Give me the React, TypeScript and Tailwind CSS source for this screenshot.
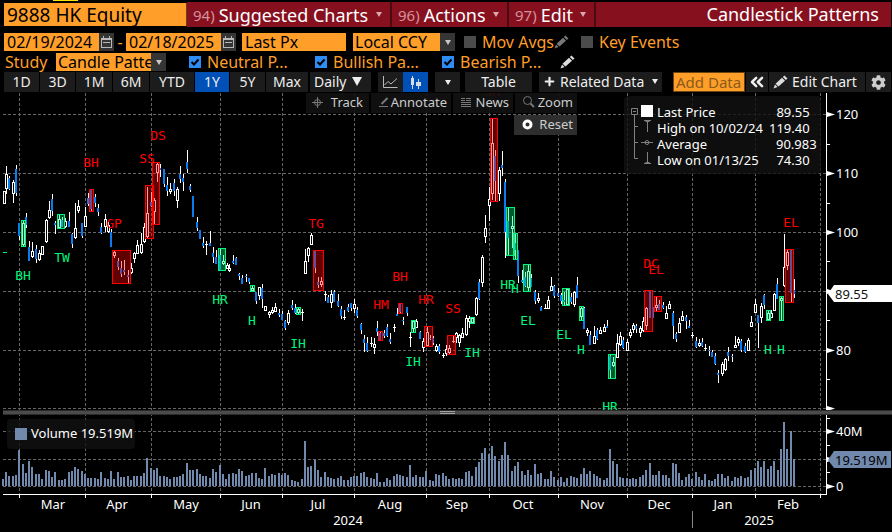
import { ChevronsLeft, Plus } from "lucide-react";
import { FaCog } from "react-icons/fa";

// x, high, low, body top, body bottom, kind (u = hollow, d = filled, n = doji)
type Candle = [number, number, number, number, number, "u" | "d" | "n"];

const candles: Candle[] = [
  [4, 191, 204, 191, 204, "u"], [6, 166, 194, 174, 189, "u"], [9, 176, 190, 178, 189, "d"],
  [13, 180, 203, 182, 194, "u"], [16, 165, 196, 169, 193, "d"], [19, 223, 240, 223, 236, "d"],
  [23, 221, 246, 223, 245, "u"], [26, 213, 228, 217, 225, "d"], [29, 241, 261, 247, 261, "d"],
  [32, 242, 258, 251, 257, "u"], [36, 245, 263, 249, 259, "d"], [39, 250, 261, 253, 260, "u"],
  [42, 246, 255, 246, 255, "u"], [46, 219, 243, 220, 242, "u"], [49, 201, 219, 210, 218, "u"],
  [52, 194, 216, 199, 211, "d"], [55, 221, 234, 223, 225, "d"], [59, 215, 228, 219, 228, "u"],
  [62, 217, 227, 220, 227, "d"], [65, 218, 228, 221, 227, "u"], [69, 212, 227, 221, 227, "d"],
  [72, 233, 248, 234, 244, "d"], [75, 203, 239, 228, 238, "u"], [78, 200, 213, 206, 211, "u"],
  [82, 223, 238, 223, 236, "d"], [85, 207, 227, 216, 227, "u"], [88, 193, 206, 198, 204, "d"],
  [91, 190, 211, 190, 209, "d"], [95, 194, 207, 197, 203, "d"], [98, 204, 216, 208, 212, "d"],
  [101, 223, 234, 227, 233, "d"], [105, 214, 232, 219, 227, "u"], [108, 222, 233, 225, 232, "u"],
  [111, 229, 247, 232, 247, "d"], [114, 251, 258, 252, 256, "u"], [118, 258, 270, 261, 267, "d"],
  [121, 261, 277, 268, 274, "d"], [124, 260, 275, 270, 272, "d"], [128, 270, 283, 275, 277, "d"],
  [131, 263, 274, 268, 273, "u"], [134, 252, 263, 253, 259, "u"], [137, 240, 254, 245, 254, "u"],
  [141, 233, 254, 244, 253, "u"], [144, 223, 243, 227, 242, "u"], [147, 187, 238, 213, 237, "u"],
  [151, 192, 207, 202, 206, "d"], [154, 198, 225, 200, 212, "u"], [157, 163, 182, 164, 173, "u"],
  [160, 164, 177, 168, 170, "d"], [164, 169, 187, 169, 184, "d"], [167, 177, 196, 185, 191, "d"],
  [170, 183, 194, 189, 192, "u"], [174, 179, 196, 183, 191, "d"], [177, 187, 208, 189, 201, "u"],
  [180, 166, 183, 174, 179, "d"], [183, 174, 191, 178, 182, "d"], [187, 150, 173, 162, 169, "d"],
  [190, 184, 192, 186, 190, "d"], [193, 196, 217, 196, 217, "d"], [197, 217, 231, 222, 228, "d"],
  [200, 230, 239, 230, 239, "d"], [203, 237, 248, 243, 246, "d"], [206, 241, 255, 244, 244, "n"],
  [210, 231, 246, 243, 246, "d"], [213, 247, 263, 253, 257, "d"], [216, 250, 264, 257, 264, "d"],
  [220, 249, 270, 255, 270, "d"], [223, 255, 265, 261, 264, "u"], [227, 263, 269, 265, 269, "u"],
  [229, 264, 272, 268, 271, "u"], [233, 255, 264, 261, 263, "d"], [236, 257, 265, 258, 265, "d"],
  [239, 273, 280, 274, 276, "d"], [242, 275, 284, 278, 284, "d"], [246, 274, 282, 276, 277, "d"],
  [249, 278, 284, 278, 282, "d"], [252, 286, 291, 288, 291, "u"], [256, 292, 304, 292, 301, "d"],
  [259, 287, 300, 287, 296, "u"], [262, 284, 308, 288, 299, "d"], [265, 306, 311, 306, 311, "u"],
  [269, 311, 318, 312, 315, "u"], [272, 307, 314, 310, 313, "u"], [275, 303, 312, 307, 312, "u"],
  [279, 309, 317, 313, 315, "d"], [282, 311, 320, 314, 320, "d"], [285, 320, 330, 321, 328, "d"],
  [288, 310, 325, 313, 323, "u"], [292, 300, 310, 305, 308, "d"], [295, 304, 314, 308, 313, "d"],
  [298, 308, 314, 309, 313, "u"], [302, 309, 321, 312, 312, "n"], [305, 249, 274, 261, 274, "u"],
  [308, 247, 262, 248, 256, "u"], [311, 233, 245, 235, 245, "u"], [315, 251, 273, 251, 268, "d"],
  [318, 277, 288, 282, 285, "d"], [321, 277, 287, 281, 285, "u"], [325, 291, 301, 294, 294, "n"],
  [328, 295, 303, 297, 303, "d"], [331, 290, 308, 294, 303, "u"], [334, 290, 302, 292, 302, "d"],
  [338, 294, 307, 301, 306, "d"], [341, 306, 319, 309, 316, "d"], [344, 310, 320, 317, 317, "n"],
  [348, 304, 312, 307, 311, "d"], [351, 303, 311, 303, 308, "d"], [354, 299, 313, 304, 309, "u"],
  [357, 307, 318, 310, 316, "d"], [361, 323, 334, 324, 330, "d"], [364, 335, 352, 339, 343, "d"],
  [367, 337, 352, 343, 351, "d"], [371, 337, 347, 343, 343, "n"], [374, 338, 354, 344, 348, "u"],
  [377, 321, 336, 328, 332, "d"], [380, 331, 340, 333, 340, "d"], [384, 330, 338, 333, 336, "d"],
  [387, 324, 337, 327, 336, "d"], [390, 333, 344, 339, 342, "d"], [394, 324, 332, 327, 327, "n"],
  [397, 308, 316, 314, 316, "d"], [400, 303, 313, 304, 312, "d"], [403, 317, 325, 320, 321, "d"],
  [407, 307, 316, 307, 313, "d"], [410, 332, 347, 337, 337, "n"], [413, 320, 332, 321, 329, "u"],
  [416, 319, 328, 321, 328, "u"], [420, 331, 339, 332, 339, "d"], [423, 338, 352, 341, 348, "u"],
  [427, 327, 346, 332, 346, "u"], [430, 335, 340, 338, 339, "d"], [433, 336, 345, 338, 343, "d"],
  [436, 344, 352, 346, 351, "u"], [439, 344, 354, 346, 352, "d"], [443, 353, 358, 355, 355, "n"],
  [446, 345, 356, 349, 354, "u"], [449, 345, 354, 348, 353, "u"], [453, 336, 343, 341, 341, "n"],
  [456, 332, 343, 333, 338, "u"], [459, 334, 347, 335, 343, "u"], [462, 328, 338, 333, 338, "u"],
  [466, 315, 336, 318, 335, "u"], [469, 316, 328, 318, 322, "u"], [472, 317, 324, 318, 323, "u"],
  [476, 297, 316, 298, 315, "u"], [479, 279, 300, 282, 299, "d"], [482, 255, 287, 257, 283, "u"],
  [485, 215, 243, 228, 237, "u"], [489, 187, 221, 199, 206, "u"], [492, 119, 200, 143, 194, "u"],
  [495, 150, 201, 156, 181, "d"], [499, 167, 201, 170, 194, "u"], [502, 151, 176, 165, 168, "d"],
  [505, 179, 258, 182, 232, "d"], [508, 208, 255, 221, 238, "d"], [512, 216, 248, 226, 229, "u"],
  [515, 233, 259, 243, 250, "d"], [518, 250, 283, 250, 276, "d"], [522, 270, 283, 280, 282, "d"],
  [525, 272, 287, 277, 286, "d"], [528, 265, 291, 271, 288, "u"], [531, 274, 287, 278, 287, "d"],
  [535, 290, 304, 292, 301, "d"], [538, 293, 303, 298, 301, "u"], [541, 306, 311, 307, 311, "d"],
  [545, 304, 309, 308, 308, "n"], [548, 296, 309, 300, 309, "u"], [551, 277, 291, 286, 291, "u"],
  [554, 285, 298, 286, 296, "d"], [558, 288, 297, 293, 296, "d"], [561, 293, 304, 295, 301, "d"],
  [564, 292, 306, 300, 302, "d"], [567, 289, 305, 289, 305, "u"], [571, 293, 304, 297, 302, "d"],
  [574, 291, 307, 292, 305, "u"], [577, 277, 298, 285, 298, "d"], [581, 307, 320, 308, 317, "u"],
  [584, 307, 329, 308, 329, "d"], [587, 328, 336, 330, 333, "u"], [590, 331, 345, 335, 345, "d"],
  [594, 326, 344, 336, 344, "u"], [597, 328, 340, 330, 339, "d"], [600, 327, 334, 330, 334, "u"],
  [604, 324, 332, 327, 332, "u"], [607, 320, 328, 326, 328, "d"], [610, 355, 378, 356, 370, "d"],
  [613, 357, 367, 362, 366, "u"], [617, 334, 358, 343, 358, "u"], [620, 332, 346, 336, 345, "u"],
  [623, 337, 349, 340, 348, "d"], [627, 339, 351, 342, 351, "u"], [630, 329, 338, 332, 336, "u"],
  [633, 323, 333, 325, 330, "u"], [636, 324, 333, 326, 329, "d"], [640, 326, 337, 328, 333, "u"],
  [643, 317, 332, 321, 331, "u"], [646, 307, 330, 308, 326, "u"], [650, 291, 318, 291, 318, "d"],
  [653, 307, 318, 307, 318, "d"], [656, 297, 311, 305, 308, "u"], [659, 300, 310, 304, 310, "d"],
  [663, 302, 309, 305, 308, "d"], [666, 306, 319, 313, 319, "u"], [669, 301, 309, 304, 309, "u"],
  [673, 311, 339, 313, 326, "d"], [676, 332, 342, 334, 339, "d"], [679, 318, 333, 323, 333, "u"],
  [682, 311, 321, 316, 321, "u"], [686, 315, 329, 317, 321, "d"], [689, 320, 328, 326, 328, "d"],
  [692, 332, 338, 335, 335, "n"], [696, 337, 348, 341, 347, "d"], [699, 339, 347, 343, 346, "u"],
  [702, 338, 347, 342, 346, "d"], [705, 344, 351, 348, 348, "n"], [709, 346, 356, 350, 351, "d"],
  [712, 350, 357, 352, 357, "d"], [715, 353, 365, 356, 364, "d"], [718, 370, 383, 373, 375, "d"],
  [722, 362, 376, 364, 374, "u"], [725, 358, 371, 359, 370, "u"], [728, 347, 361, 352, 356, "d"],
  [732, 354, 362, 356, 357, "d"], [735, 336, 348, 345, 348, "u"], [738, 337, 346, 339, 343, "u"],
  [741, 339, 352, 341, 350, "d"], [745, 343, 353, 346, 352, "d"], [748, 338, 351, 340, 351, "u"],
  [751, 316, 327, 322, 327, "u"], [755, 299, 313, 304, 313, "u"], [758, 315, 348, 315, 323, "d"],
  [761, 303, 323, 306, 318, "u"], [764, 294, 309, 295, 305, "d"], [768, 310, 321, 313, 320, "u"],
  [771, 310, 318, 313, 318, "u"], [774, 293, 311, 294, 311, "u"], [777, 278, 299, 284, 299, "d"],
  [781, 297, 320, 298, 301, "u"], [784, 234, 287, 267, 286, "u"], [787, 250, 270, 252, 266, "u"],
  [791, 249, 302, 249, 293, "d"], [794, 279, 298, 290, 294, "d"],
];

// x, bar height
const volumes: [number, number][] = [
  [3, 7], [6, 14], [9, 10], [13, 10], [16, 11], [19, 36], [23, 22], [26, 13], [29, 25], [32, 19],
  [36, 12], [39, 12], [42, 7], [46, 16], [49, 15], [52, 9], [55, 14], [59, 6], [62, 6], [65, 7],
  [69, 14], [72, 15], [75, 19], [78, 17], [82, 15], [85, 12], [88, 8], [91, 8], [95, 8], [98, 7],
  [101, 14], [105, 8], [108, 7], [111, 15], [114, 7], [118, 14], [121, 9], [124, 9], [128, 10],
  [131, 6], [134, 10], [137, 10], [141, 10], [144, 13], [147, 28], [151, 18], [154, 16], [157, 18],
  [160, 10], [164, 10], [167, 9], [170, 7], [174, 9], [177, 9], [180, 10], [183, 12], [187, 23],
  [190, 16], [193, 16], [197, 17], [200, 12], [203, 10], [206, 10], [210, 8], [213, 17], [216, 14],
  [220, 21], [223, 12], [226, 7], [229, 12], [233, 13], [236, 12], [239, 17], [242, 15], [246, 10],
  [249, 11], [252, 13], [256, 13], [259, 8], [262, 7], [265, 18], [269, 10], [272, 12], [275, 11],
  [279, 13], [282, 11], [285, 13], [288, 11], [292, 6], [295, 5], [298, 4], [302, 7], [305, 45],
  [308, 19], [311, 20], [315, 26], [318, 16], [321, 9], [325, 14], [328, 9], [331, 8], [334, 7],
  [338, 8], [341, 10], [344, 6], [348, 6], [351, 9], [354, 10], [357, 10], [361, 13], [364, 14],
  [367, 9], [371, 8], [374, 7], [377, 13], [380, 4], [384, 4], [387, 8], [390, 6], [394, 10],
  [397, 12], [400, 11], [403, 10], [407, 9], [410, 21], [413, 9], [416, 11], [420, 9], [423, 9],
  [426, 15], [430, 6], [433, 5], [436, 12], [439, 11], [443, 13], [446, 10], [449, 7], [453, 8],
  [456, 7], [459, 8], [462, 7], [466, 14], [469, 15], [472, 10], [476, 19], [479, 24], [482, 33],
  [485, 38], [489, 32], [492, 40], [495, 30], [499, 25], [502, 31], [505, 44], [508, 31], [512, 15],
  [515, 20], [518, 24], [522, 15], [525, 11], [528, 16], [531, 11], [535, 22], [538, 12], [541, 13],
  [545, 7], [548, 7], [551, 15], [554, 9], [558, 6], [561, 9], [564, 4], [567, 8], [571, 10],
  [574, 9], [577, 8], [581, 12], [584, 18], [587, 12], [590, 15], [594, 12], [597, 10], [600, 8],
  [604, 6], [607, 8], [610, 37], [613, 25], [617, 22], [620, 9], [623, 8], [627, 8], [630, 7],
  [633, 8], [636, 7], [640, 9], [643, 11], [646, 16], [650, 23], [653, 11], [656, 11], [659, 15],
  [663, 11], [666, 11], [669, 8], [673, 23], [676, 22], [679, 13], [682, 6], [686, 9], [689, 12],
  [692, 7], [696, 14], [699, 9], [702, 6], [705, 12], [709, 6], [712, 5], [715, 7], [718, 12],
  [722, 12], [725, 8], [728, 10], [732, 5], [735, 9], [738, 8], [741, 10], [745, 8], [748, 9],
  [751, 16], [755, 18], [758, 25], [761, 19], [764, 25], [768, 17], [771, 20], [774, 25], [778, 16],
  [781, 37], [784, 64], [787, 37], [791, 55], [794, 27],
];

// x, y, width, height
const bearishBoxes = [
  [89, 189, 5, 23], [112, 250, 19, 34], [145, 185, 9, 54], [152, 162, 8, 63], [313, 250, 11, 41],
  [378, 331, 5, 10], [398, 303, 5, 11], [424, 326, 9, 21], [447, 335, 9, 20], [490, 118, 8, 84],
  [644, 290, 9, 42], [654, 296, 8, 16], [785, 249, 9, 54],
];
const bullishBoxes = [
  [21, 220, 5, 27], [57, 214, 8, 15], [218, 248, 8, 23], [250, 285, 5, 7], [296, 307, 5, 8],
  [411, 320, 5, 13], [470, 317, 5, 7], [506, 207, 9, 49], [513, 233, 5, 27], [523, 264, 8, 28],
  [562, 288, 8, 18], [579, 306, 5, 15], [608, 354, 8, 25], [766, 310, 5, 11], [779, 296, 5, 25],
];

const bearishLabels: [string, number, number][] = [
  ["BH", 91, 167], ["GP", 114, 228], ["SS", 147, 163], ["DS", 158, 140], ["TG", 316, 228],
  ["HM", 381, 309], ["BH", 400, 281], ["HR", 426, 304], ["SS", 453, 313], ["HR", 492, 96],
  ["DC", 651, 268], ["EL", 656, 274], ["EL", 791, 227],
];
const bullishLabels: [string, number, number][] = [
  ["BH", 23, 280], ["TW", 62, 262], ["HR", 220, 304], ["H", 252, 325], ["IH", 298, 348],
  ["IH", 413, 366], ["IH", 472, 357], ["HR", 508, 289], ["H", 515, 293], ["EL", 528, 325],
  ["EL", 564, 339], ["H", 581, 354], ["HR", 610, 411], ["H", 768, 354], ["H", 781, 354],
];

const gridX = [19, 85, 151, 220, 282, 354, 426, 489, 558, 627, 692, 755, 820];
const gridY = [114, 173, 232, 291, 350, 408, 431, 459, 486];
const minorTicks = [144, 203, 261, 320, 379, 418, 445, 472];
const axisLabels: [string, number][] = [
  ["120", 114], ["110", 173], ["100", 232], ["", 291], ["80", 350], ["", 408], ["40M", 431], ["", 459], ["0", 486],
];
const months: [string, number][] = [
  ["Mar", 53], ["Apr", 117], ["May", 186], ["Jun", 251], ["Jul", 318], ["Aug", 390],
  ["Sep", 457], ["Oct", 523], ["Nov", 592], ["Dec", 659], ["Jan", 723], ["Feb", 788],
];

function Pencil({ className }: { className: string }) {
  return (
    <svg viewBox="0 0 15 14" width="15" height="14" fill="currentColor" className={className}>
      <path d="M11.5 0.5 14.5 3.5 12.8 5 9.8 2Z M9 2.7 12 5.7 5.5 11.5 2.5 8.8Z M2 9.6 4.6 12 0.5 13.5Z" />
    </svg>
  );
}

function Arrow({ className = "" }: { className?: string }) {
  return (
    <svg viewBox="0 0 6 5" width="6" height="5" className={className}>
      <path d="M0 0H6L3 5Z" fill="currentColor" />
    </svg>
  );
}

function CalendarButton({ label }: { label: string }) {
  return (
    <button aria-label={label} className="flex h-[18px] w-[15px] items-center justify-center bg-[#353535] text-[#b8b8b8]">
      <svg viewBox="0 0 11 12" width="11" height="12" fill="none" stroke="currentColor" shapeRendering="crispEdges">
        <path d="M0.5 2.5H10.5V11.5H0.5Z M0 3.5H11 M2.5 0V3 M8.5 0V3 M2 6.5H9" />
      </svg>
    </button>
  );
}

function Check({ label, checked, className }: { label: string; checked?: boolean; className: string }) {
  return (
    <label className={`flex items-center gap-1.5 ${className}`}>
      <span className="relative flex size-3">
        <input
          type="checkbox"
          defaultChecked={checked}
          className="peer size-3 appearance-none bg-[#4b4b4b] checked:bg-[#2e8df5]"
        />
        <svg viewBox="0 0 12 12" className="pointer-events-none absolute inset-0 hidden peer-checked:block">
          <path d="M2.5 6 5 8.5 9.5 3.5" fill="none" stroke="#000" strokeWidth="2" />
        </svg>
      </span>
      <span>{label}</span>
    </label>
  );
}

function Select({ label, value, className }: { label: string; value: string; className: string }) {
  return (
    <span className={`relative flex h-[18px] ${className}`}>
      <select
        aria-label={label}
        className="h-full w-full appearance-none overflow-hidden border-r-[15px] border-[#353535] bg-[#ff9e28] pl-0.5 text-black"
      >
        <option>{value}</option>
      </select>
      <Arrow className="pointer-events-none absolute top-[7px] right-1 text-[#c8c8c8]" />
    </span>
  );
}

function MenuButton({ num, label, className }: { num: string; label: string; className: string }) {
  return (
    <button className={`flex items-center border-r-2 border-[#4a0a12] pl-1.5 ${className}`}>
      <span className="text-[15px] text-[#d4929a]">{num}</span>
      <span className="ml-1">{label}</span>
      <Arrow className="mr-2 ml-auto text-[#d8a8ae]" />
    </button>
  );
}

function Header() {
  return (
    <header>
      <div className="h-0.5">
        <div className="ml-[53px] h-px w-[25px] bg-[#f5e400]" />
      </div>
      <div className="flex h-[25px] pr-px pl-1 text-[18px] leading-6">
        <input
          aria-label="Security"
          defaultValue="9888 HK Equity"
          className="my-px w-[183px] min-w-0 border-r border-[#6b4210] bg-[#ff9e28] px-[3px] text-[19px] text-black outline-none"
        />
        <nav className="flex min-w-0 flex-1 bg-[#87101f] whitespace-nowrap text-white">
          <MenuButton num="94)" label="Suggested Charts" className="w-[205px]" />
          <MenuButton num="96)" label="Actions" className="w-[117px]" />
          <MenuButton num="97)" label="Edit" className="w-[87px]" />
          <h1 className="ml-auto pr-3">Candlestick Patterns</h1>
        </nav>
      </div>
      <div className="mt-1.5 flex h-[18px] items-center pl-1 text-[16px] leading-[18px] whitespace-nowrap text-[#ff9e28]">
        <input aria-label="From" defaultValue="02/19/2024" className="h-[18px] w-[95px] bg-[#ff9e28] pl-[3px] text-black outline-none" />
        <CalendarButton label="Pick start date" />
        <span className="w-3 text-center">-</span>
        <input aria-label="To" defaultValue="02/18/2025" className="h-[18px] w-[95px] bg-[#ff9e28] pl-[3px] text-black outline-none" />
        <CalendarButton label="Pick end date" />
        <input aria-label="Price field" defaultValue="Last Px" className="ml-1.5 h-[18px] w-[104px] bg-[#ff9e28] pl-[3px] text-black outline-none" />
        <Select label="Currency" value="Local CCY" className="ml-[7px] w-[102px]" />
        <Check label="Mov Avgs" className="ml-[9px] w-[90px]" />
        <Pencil className="text-[#777]" />
        <Check label="Key Events" className="ml-3" />
      </div>
      <div className="mt-0.5 flex h-[18px] items-center pl-[5px] text-[16px] leading-[18px] whitespace-nowrap text-[#ff9e28]">
        <span className="w-[51px]">Study</span>
        <Select label="Study" value="Candle Patterns" className="w-[110px]" />
        <Check label="Neutral P..." checked className="ml-[23px] w-[126px]" />
        <Check label="Bullish Pa..." checked className="w-[127px]" />
        <Check label="Bearish P..." checked className="w-[118px]" />
        <Pencil className="text-[#ddd]" />
      </div>
    </header>
  );
}

const ranges = [
  { label: "1D", className: "w-[35px]" },
  { label: "3D", className: "w-[35px]" },
  { label: "1M", className: "w-[36px]" },
  { label: "6M", className: "w-[36px]" },
  { label: "YTD", className: "w-[44px]" },
  { label: "1Y", className: "w-[34px]" },
  { label: "5Y", className: "w-[35px]" },
  { label: "Max", className: "w-[42px]" },
];

function Toolbar() {
  return (
    <div className="my-px flex h-5 gap-px pr-px pl-1 text-[14px] leading-5 whitespace-nowrap text-[#eee]">
      {ranges.map((r) => (
        <button key={r.label} className={`pb-px ${r.className} ${r.label === "1Y" ? "bg-[#0050b8]" : "bg-[#1c1c1c]"}`}>
          {r.label}
        </button>
      ))}
      <button className="ml-px flex w-[61px] items-center gap-1.5 bg-[#1c1c1c] pb-px pl-1">
        Daily
        <svg viewBox="0 0 10 9" width="10" height="9" fill="currentColor">
          <path d="M0 0H10L5 9Z" />
        </svg>
      </button>
      <div className="ml-1.5 flex">
        <button aria-label="Line chart" className="flex w-[25px] items-center justify-center bg-[#1c1c1c]">
          <svg viewBox="0 0 15 12" width="15" height="12" fill="none" stroke="#bbb">
            <path d="M0.5 0V11.5H14.5 M1.5 9 5 5.5 8 8 14 2.5" />
          </svg>
        </button>
        <button aria-label="Candle chart" className="flex w-[25px] items-center justify-center bg-[#0050b8]">
          <svg viewBox="0 0 11 13" width="11" height="13" fill="#d6dde6" shapeRendering="crispEdges">
            <path d="M2 0H3V13H2Z M1 2H4V9H1Z M8 3H9V13H8Z M6 6H11V10H6Z" />
          </svg>
        </button>
      </div>
      <button aria-label="Chart types" className="ml-1.5 flex w-[25px] items-center justify-center bg-[#1c1c1c]">
        <Arrow />
      </button>
      <button className="ml-1 w-[67px] bg-[#1c1c1c] pb-px">Table</button>
      <button className="ml-1.5 flex w-[123px] items-center gap-1 bg-[#1c1c1c] pb-px pl-1">
        <Plus size={13} strokeWidth={4} />
        Related Data
        <Arrow className="ml-1" />
      </button>
      <input
        aria-label="Add data"
        placeholder="Add Data"
        className="ml-2.5 w-[72px] border border-[#6b4210] bg-[#ff9e28] px-0.5 text-[15px] outline-none placeholder:text-[#8a5a1c]"
      />
      <button aria-label="Collapse" className="flex w-[22px] items-center justify-center bg-[#1c1c1c]">
        <ChevronsLeft size={20} strokeWidth={3} />
      </button>
      <button className="flex min-w-0 flex-1 items-center gap-1 bg-[#1c1c1c] pb-px pl-1">
        <Pencil className="text-[#ddd]" />
        Edit Chart
      </button>
      <button aria-label="Settings" className="flex w-[25px] items-center justify-center bg-[#1c1c1c] text-[#ccc]">
        <FaCog size={15} />
      </button>
    </div>
  );
}

function Chart() {
  return (
    <svg viewBox="0 93 892 439" className="block w-full" fontSize="13" role="img" aria-label="9888 HK daily candles and volume">
      <g shapeRendering="crispEdges">
        <g stroke="#666" strokeDasharray="3 2">
          {gridX.map((x) => (
            <path key={x} d={`M${x + 0.5} 93V494`} />
          ))}
          {gridY.map((y) => (
            <path key={y} d={`M3 ${y + 0.5}H826`} />
          ))}
        </g>
        {volumes.map(([x, h]) => (
          <rect key={x} x={x - 1} y={486 - h} width="2" height={h} fill="#7189ad" />
        ))}
        {candles.map(([x, high, low, top, bottom, kind]) => (
          <g key={x}>
            <rect x={x} y={high} width="1" height={low - high} fill="#fff" />
            {kind === "n" && <rect x={x - 1} y={top} width="3" height="1" fill="#fff" />}
            {kind === "d" && <rect x={x - 1} y={top} width="2" height={bottom - top} fill="#0a7cf0" />}
            {kind === "u" && (
              <rect x={x - 0.5} y={top + 0.5} width="2" height={bottom - top - 1} fill="#000" stroke="#fff" />
            )}
          </g>
        ))}
        <g fill="#f00" fillOpacity="0.38" stroke="#f00">
          {bearishBoxes.map(([x, y, w, h]) => (
            <rect key={x} x={x + 0.5} y={y + 0.5} width={w - 1} height={h - 1} />
          ))}
        </g>
        <g fill="#00ee78" fillOpacity="0.38" stroke="#00f57c">
          {bullishBoxes.map(([x, y, w, h]) => (
            <rect key={x} x={x + 0.5} y={y + 0.5} width={w - 1} height={h - 1} />
          ))}
          <path d="M3 252.5H7" />
        </g>
      </g>
      <g textAnchor="middle" className="font-['DejaVu_Sans_Mono',monospace] text-[13px]">
        {bearishLabels.map(([t, x, y]) => (
          <text key={`${t}${x}`} x={x} y={y} fill="#ff0000">
            {t}
          </text>
        ))}
        {bullishLabels.map(([t, x, y]) => (
          <text key={`${t}${x}`} x={x} y={y} fill="#00f57c">
            {t}
          </text>
        ))}
      </g>

      {/* axes */}
      <g shapeRendering="crispEdges">
        <path d="M826.5 93V494.5H3" fill="none" stroke="#fff" />
        {gridX.map((x) => (
          <rect key={x} x={x} y="495" width="1" height="3" fill="#fff" />
        ))}
        {minorTicks.map((y) => (
          <rect key={y} x="827" y={y} width="3" height="1" fill="#fff" />
        ))}
        <rect x="692" y="511" width="1" height="17" fill="#888" />
      </g>
      <g fill="#fff">
        {axisLabels.map(([t, y]) => (
          <g key={y}>
            <path d={`M827 ${y - 2}L835 ${y + 0.5}L827 ${y + 3}Z`} />
            <text x="836" y={y + 5}>
              {t}
            </text>
          </g>
        ))}
        {months.map(([t, x]) => (
          <text key={t} x={x} y="509" textAnchor="middle">
            {t}
          </text>
        ))}
        <text x="348" y="525" textAnchor="middle">2024</text>
        <text x="759" y="525" textAnchor="middle">2025</text>
      </g>

      {/* pane splitter */}
      <rect x="3" y="410" width="889" height="5" fill="#2a2a2a" />
      <rect x="3" y="411" width="889" height="3" fill="#4b4b4b" />
      <path d="M440 411.5H455M440 413.5H455" stroke="#a5a5a5" />

      <path d="M828 294 834 285H892V302H834Z" fill="#fff" />
      <text x="835" y="299" fill="#111">89.55</text>
      <path d="M828 460 834 451H891V468H834Z" fill="#7189ad" />
      <text x="835" y="465" fill="#000">19.519M</text>
    </svg>
  );
}

const legend = [
  ["Last Price", "89.55"],
  ["High on 10/02/24", "119.40"],
  ["Average", "90.983"],
  ["Low on 01/13/25", "74.30"],
];

export default function App() {
  return (
    <main className="min-h-screen overflow-hidden bg-black font-['Noto_Sans',sans-serif]">
      <Header />
      <Toolbar />
      <section className="relative">
        <Chart />

        <div className="absolute top-0 left-[306px] flex gap-0.5 text-[13px] leading-[18px] text-[#ccc]">
          <button className="flex h-5 w-[63px] items-center justify-between bg-[#121212]/90 px-1.5 pb-0.5">
            <svg viewBox="0 0 11 11" width="11" height="11" fill="none" stroke="#777">
              <circle cx="5.5" cy="5.5" r="3" />
              <path d="M5.5 0V11M0 5.5H11" />
            </svg>
            Track
          </button>
          <button className="flex h-5 w-20 items-center justify-between bg-[#121212]/90 pr-1 pb-0.5 pl-2">
            <svg viewBox="0 0 10 10" width="10" height="10" fill="none" stroke="#777">
              <path d="M8.5 1 2.5 7" strokeWidth="2" />
              <path d="M0 9.5H9" />
            </svg>
            Annotate
          </button>
          <button className="flex h-5 w-[60px] items-center justify-between bg-[#121212]/90 pr-1 pb-0.5 pl-2">
            <svg viewBox="0 0 10 10" width="10" height="10" stroke="#777" shapeRendering="crispEdges">
              <path d="M0 1.5H4M0 3.5H4M5 1.5H10M5 3.5H10M0 5.5H10M0 7.5H10M0 9.5H10" />
            </svg>
            News
          </button>
          <button className="flex h-5 w-[62px] items-center justify-between bg-[#121212]/90 pr-1 pb-0.5 pl-2">
            <svg viewBox="0 0 12 12" width="12" height="12" fill="none" stroke="#777">
              <circle cx="4.5" cy="4.5" r="4" />
              <path d="M7.5 7.5 11 11" strokeWidth="2" />
            </svg>
            Zoom
          </button>
        </div>
        <button className="absolute top-[22px] left-[514px] flex h-5 w-[63px] items-center justify-between bg-[#2e2e2e] pr-1 pb-0.5 pl-2 text-[13px] leading-[18px] text-[#ccc]">
          <svg viewBox="0 0 11 11" width="11" height="11" fill="none" stroke="#fff" strokeWidth="3">
            <circle cx="5.5" cy="5.5" r="3.5" />
          </svg>
          Reset
        </button>

        <div className="absolute top-[3px] right-[71px] flex h-[78px] w-[197px] rounded-sm bg-[#111]/80 pt-2 text-[13px] leading-4 text-white">
          <svg viewBox="0 0 33 64" width="33" height="64" fill="none" stroke="#808080" className="shrink-0">
            <path d="M7.5 4.5H13.5V10.5H7.5Z M9 7.5H12 M10.5 11V54.5H14 M10.5 22.5H14 M10.5 38.5H14 M17 38.5H29" />
            <path d="M20 16.5H27 M21.5 17.5H25.5 M23.5 16V28 M23.5 48V60 M20 59.5H27 M21.5 58.5H25.5" />
            <circle cx="23" cy="38.5" r="2" />
            <rect x="17" y="1" width="12" height="12" fill="#fff" stroke="none" />
          </svg>
          <table className="h-16">
            <tbody>
              {legend.map(([name, value]) => (
                <tr key={name}>
                  <th scope="row" className="w-[112px] text-left font-normal whitespace-nowrap">
                    {name}
                  </th>
                  <td className={value === "90.983" ? "w-[47px] text-right" : "w-[47px] pr-[7px] text-right"}>{value}</td>
                </tr>
              ))}
            </tbody>
          </table>
        </div>

        <div className="absolute top-[326px] left-[7px] flex h-[30px] w-32 items-center gap-1 rounded-sm bg-[#111]/80 pl-2 text-[13px] whitespace-nowrap text-white">
          <span className="size-3 bg-[#7189ad]" />
          <span>Volume 19.519M</span>
        </div>
      </section>
    </main>
  );
}
